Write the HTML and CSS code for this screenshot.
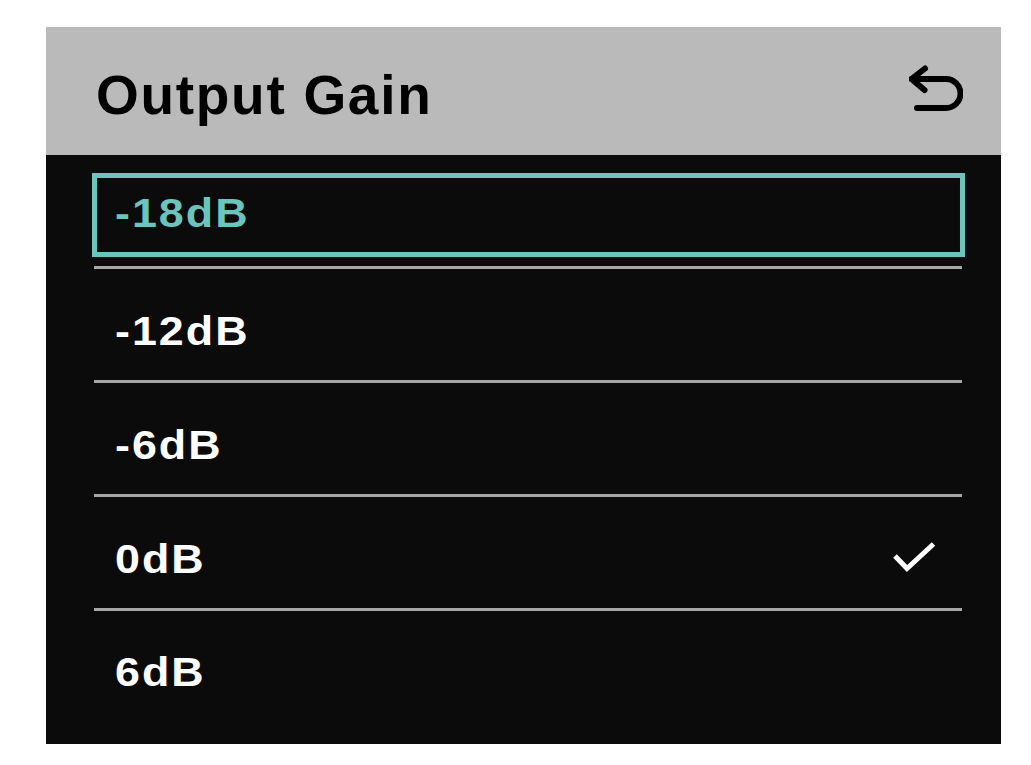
FILE: index.html
```html
<!DOCTYPE html>
<html lang="en">
<head>
<meta charset="utf-8">
<title>Output Gain</title>
<link rel="stylesheet" href="styles.css">
</head>
<body>
<div class="panel">
  <header class="header">
    <h1 class="title">Output Gain</h1>
    <svg class="back-icon" width="54" height="50" viewBox="0 0 54 50" aria-label="Back">
      <path d="M16 4.5 L2.5 15 L15.5 26 M2.5 15 H37 A14.5 14.5 0 0 1 37 44 H8" fill="none" stroke="#000" stroke-width="6" stroke-linecap="round" stroke-linejoin="round"/>
    </svg>
  </header>
  <ul class="list">
    <li class="row row-first">
      <div class="selected"><span class="label label-active">-18dB</span></div>
    </li>
    <li class="row"><span class="label">-12dB</span></li>
    <li class="row"><span class="label">-6dB</span></li>
    <li class="row">
      <span class="label">0dB</span>
      <svg class="check" width="46" height="33" viewBox="0 0 46 33" aria-label="Selected">
        <path d="M3 16 L15 28.5 L41.5 4" fill="none" stroke="#fff" stroke-width="5" stroke-linecap="butt" stroke-linejoin="miter"/>
      </svg>
    </li>
    <li class="row row-last"><span class="label">6dB</span></li>
  </ul>
</div>
</body>
</html>
```

FILE: styles.css
```css
* {
  box-sizing: border-box;
}

html, body {
  margin: 0;
  padding: 0;
  background: #ffffff;
}

body {
  padding: 27px 30px 0 46px;
  font-family: "Liberation Sans", Arial, Helvetica, sans-serif;
}

.panel {
  width: 955px;
  height: 717px;
  background: #0b0b0b;
  display: flex;
  flex-direction: column;
}

.header {
  height: 128px;
  background: #bababa;
  display: flex;
  align-items: center;
  justify-content: space-between;
  padding: 8px 39px 0 50px;
  flex: none;
}

.title {
  margin: 0;
  font-size: 55px;
  line-height: 55px;
  font-weight: 700;
  letter-spacing: 1.7px;
  color: #000;
}

.back-icon {
  display: block;
  margin-bottom: 12px;
  margin-right: -1px;
}

.list {
  list-style: none;
  margin: 0;
  padding: 0 39px 0 48px;
  flex: 1;
  display: flex;
  flex-direction: column;
}

.row {
  height: 114px;
  border-bottom: 3px solid #a6a6a6;
  padding: 42px 24px 0 21px;
  display: flex;
  align-items: flex-start;
  justify-content: space-between;
  flex: none;
}

.row-first {
  padding: 18px 0 9px 0;
  display: block;
}

.row-last {
  border-bottom: none;
  flex: 1;
  padding-top: 41px;
}

.selected {
  height: 84px;
  border: 5px solid #6cc5bc;
  margin: 0 -3px 0 -2px;
  padding: 15px 18px 0 18px;
}

.label {
  display: block;
  font-size: 40px;
  line-height: 40px;
  font-weight: 700;
  letter-spacing: 1.8px;
  color: #ffffff;
  transform: scaleX(1.12);
  transform-origin: left center;
}

.label-active {
  color: #6cc5bc;
}

.check {
  display: block;
  margin-top: 1px;
}
```
